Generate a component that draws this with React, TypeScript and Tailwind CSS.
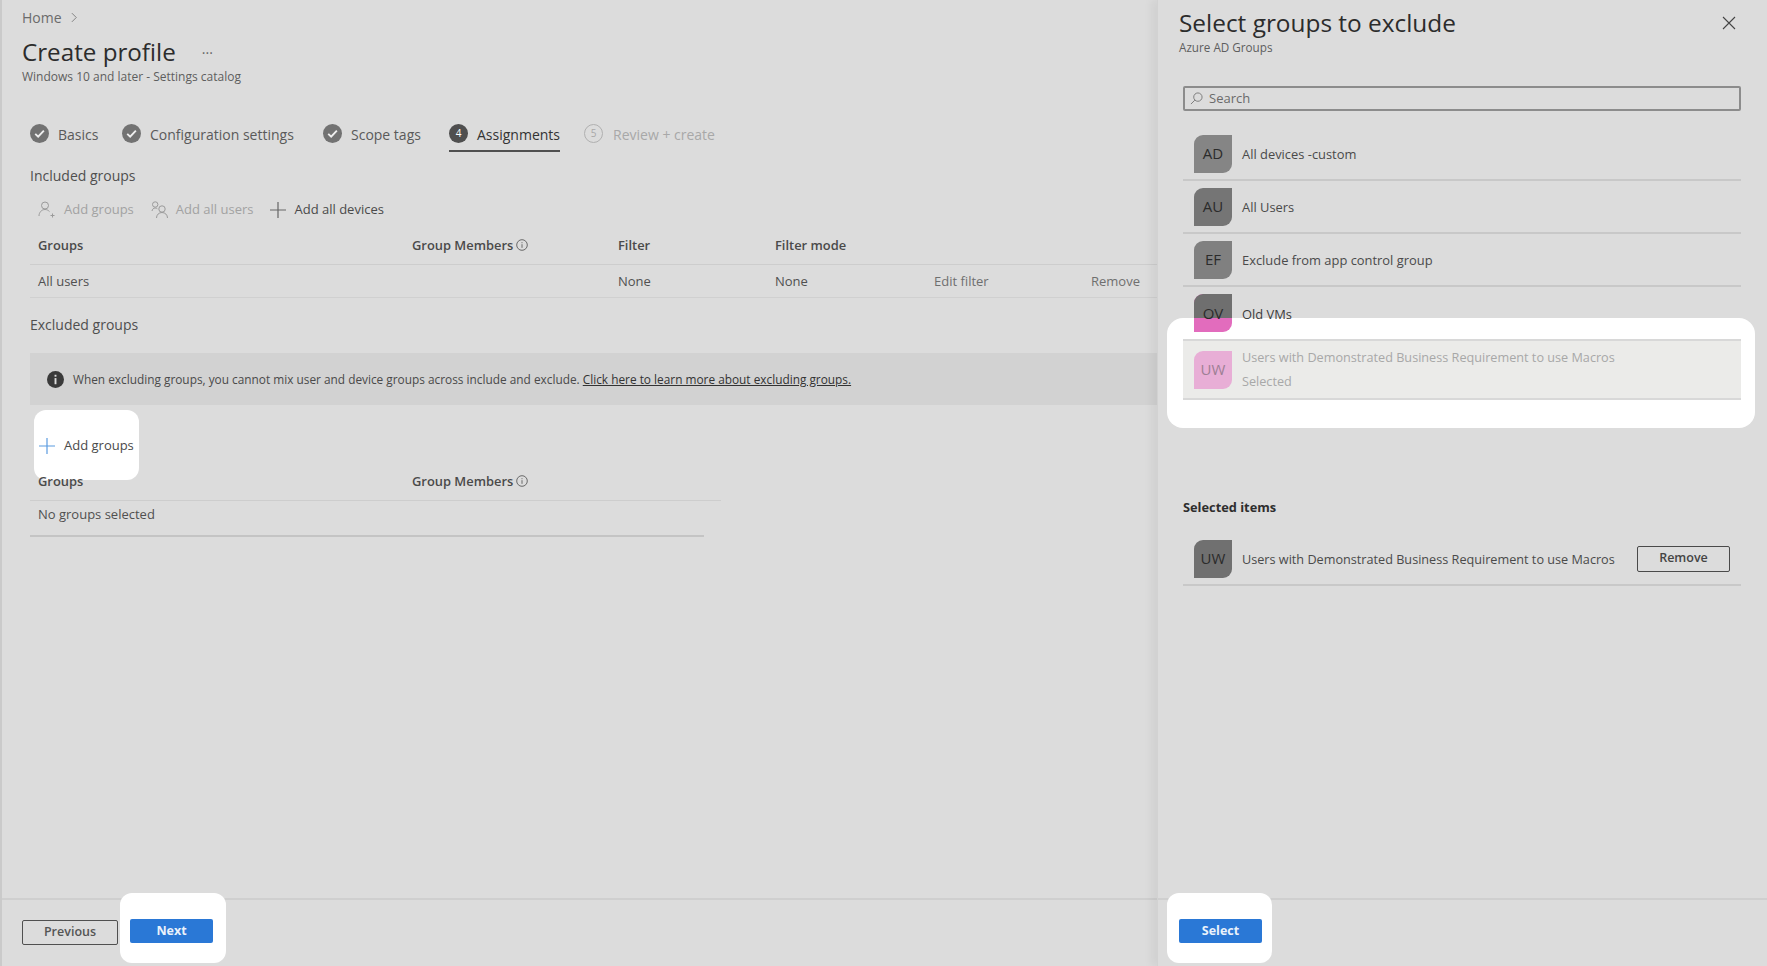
const font = "font-['Open_Sans',sans-serif]";

const CheckCircle = () => (
  <svg viewBox="0 0 20 20" className="w-[19px] h-[19px] shrink-0">
    <circle cx="10" cy="10" r="10" fill="#727272" />
    <path d="M5.500 10.400 8.600 13.400 14.600 7" fill="none" stroke="#eeeeee" strokeWidth="2" />
  </svg>
);

const PersonAdd = () => (
  <svg viewBox="0 0 18 18" className="w-[18px] h-[18px] shrink-0" fill="none" stroke="#9a9a9a" strokeWidth="1">
    <circle cx="7" cy="4.500" r="3.500" />
    <path d="M1 15c0-3.600 2.600-6.500 6-6.500 1.800 0 3.400.8 4.500 2.100" />
    <path d="M14.500 12.500v4M12.500 14.500h4" />
  </svg>
);

const PersonsIcon = () => (
  <svg viewBox="0 0 18 18" className="w-[18px] h-[18px] shrink-0" fill="none" stroke="#9a9a9a" strokeWidth="1">
    <circle cx="4.200" cy="3.500" r="2.700" />
    <path d="M1 10c.3-1.900 1.600-3 3.200-3 .8 0 1.500.2 2.100.7" />
    <circle cx="11" cy="8" r="3.200" />
    <path d="M5.500 17c0-3.200 2.400-5.500 5.500-5.500s5.500 2.300 5.500 5.500" />
  </svg>
);

const Plus = ({ color }: { color: string }) => (
  <svg viewBox="0 0 16 16" className="w-[16px] h-[16px] shrink-0" fill="none" stroke={color} strokeWidth="1.200">
    <path d="M8 0v16M0 8h16" />
  </svg>
);

const InfoOutline = () => (
  <svg viewBox="0 0 12 12" className="w-[12px] h-[12px] shrink-0" fill="none" stroke="#5c5c5c" strokeWidth="0.900">
    <circle cx="6" cy="6" r="5.300" />
    <path d="M6 5.200v3.600M6 3.200v1" />
  </svg>
);

const Avatar = ({ label, className }: { label: string; className: string }) => (
  <div className={`w-[38px] h-[38px] shrink-0 rounded-tl-[9px] rounded-br-[9px] flex items-center justify-center text-[15px] ${className}`}>
    {label}
  </div>
);

const GroupRow = ({ label, name, color }: { label: string; name: string; color: string }) => (
  <div className="h-[53px] flex items-center gap-[10px] pl-[11px] border-b-2 border-[#c8c8c8] text-[12.900px] text-[#4a4a4a]">
    <Avatar label={label} className={`${color} text-[#2b2b2b]`} />
    <span className="pt-[2px]">{name}</span>
  </div>
);

const Tab = ({ width, icon, label, active }: { width: string; icon: React.ReactNode; label: string; active?: boolean }) => (
  <div className={`${width} h-[31px] pt-[3px] flex`}>
    <div className={`flex h-[28px] gap-[9px] items-start ${active ? "border-b-[2px] border-[#505050] text-[#333333]" : "text-[#5a5a5a]"}`}>
      {icon}
      <span className="text-[14px]">{label}</span>
    </div>
  </div>
);

const TableHead = ({ className, filters }: { className: string; filters?: boolean }) => (
  <div className={`h-[37px] pb-[1px] grid grid-cols-[374px_206px_157px_159px_157px_1fr] items-center pl-[8px] border-b border-[#cdcdcd] text-[12.900px] font-semibold text-[#4a4a4a] ${className}`}>
    <span className="relative z-20">Groups</span>
    <span className="flex items-center gap-[3px]">
      Group Members <InfoOutline />
    </span>
    {filters && <span>Filter</span>}
    {filters && <span>Filter mode</span>}
  </div>
);

export default function App() {
  return (
    <div className={`relative w-[1767px] h-[966px] overflow-hidden bg-[#dcdcdc] flex ${font}`}>
      {/* main page */}
      <div className="w-[1157px] h-full shrink-0 flex flex-col border-l-2 border-[#cacaca]">
        <div className="pl-[20px]">
          <div className="mt-[7px] h-[20px] flex items-center gap-[9px] text-[14px] text-[#6b6b6b]">
            Home
            <svg viewBox="0 0 8 12" className="w-[7px] h-[11px]" fill="none" stroke="#777777" strokeWidth="1">
              <path d="M1 1l5 5-5 5" />
            </svg>
          </div>
          <div className="mt-[8px] h-[34px] flex items-center text-[#2c2c2c]">
            <span className="text-[24.200px]">Create profile</span>
            <span className="ml-[26px] text-[14px] text-[#666666] pb-[8px]">...</span>
          </div>
          <div className="h-[16px] flex items-center text-[12px] text-[#5e5e5e]">
            Windows 10 and later - Settings catalog
          </div>
        </div>

        <div className="mt-[36px] pl-[28px] flex">
          <Tab width="w-[92px]" icon={<CheckCircle />} label="Basics" />
          <Tab width="w-[201px]" icon={<CheckCircle />} label="Configuration settings" />
          <Tab width="w-[126px]" icon={<CheckCircle />} label="Scope tags" />
          <Tab
            width="w-[135px]"
            active
            icon={
              <div className="w-[19px] h-[19px] rounded-full bg-[#4f4f4f] text-white text-[10px] flex items-center justify-center">4</div>
            }
            label="Assignments"
          />
          <div className="h-[28px] mt-[3px] flex items-start gap-[10px] text-[14px] text-[#a8a8a8]">
            <div className="w-[19px] h-[19px] rounded-full border border-[#b0b0b0] text-[10px] flex items-center justify-center">5</div>
            <span>Review + create</span>
          </div>
        </div>

        <div className="pl-[28px] flex flex-col">
          <div className="mt-[13px] h-[20px] flex items-center text-[14px] text-[#4f4f4f]">Included groups</div>
          <div className="mt-[11px] h-[28px] flex items-center pl-[8px] text-[13px]">
            <div className="flex items-center gap-[8px] text-[#a2a2a2]">
              <PersonAdd />
              Add groups
            </div>
            <div className="ml-[17px] flex items-center gap-[7px] text-[#a2a2a2]">
              <PersonsIcon />
              Add all users
            </div>
            <div className="ml-[17px] flex items-center gap-[8px] text-[#4a4a4a]">
              <Plus color="#666666" />
              Add all devices
            </div>
          </div>

          <div className="mt-[4px]">
            <TableHead className="w-[1127px]" filters />
            <div className="h-[33px] pt-[2px] grid grid-cols-[374px_206px_157px_159px_157px_1fr] items-center pl-[8px] border-b border-[#d0d0d0] text-[13px] text-[#505050]">
              <span>All users</span>
              <span />
              <span>None</span>
              <span>None</span>
              <span className="text-[#6f6f6f]">Edit filter</span>
              <span className="text-[#6f6f6f]">Remove</span>
            </div>
          </div>

          <div className="mt-[16px] h-[20px] flex items-center text-[14px] text-[#4f4f4f]">Excluded groups</div>

          <div className="mt-[19px] h-[52px] pt-[1px] bg-[#d2d2d2] flex items-center pl-[17px] gap-[9px] text-[11.850px] text-[#4a4a4a]">
            <svg viewBox="0 0 18 18" className="w-[17px] h-[17px] shrink-0">
              <circle cx="9" cy="9" r="9" fill="#3a3a3a" />
              <rect x="8" y="7.500" width="2" height="6.500" fill="#dddddd" />
              <rect x="8" y="4" width="2" height="2" fill="#dddddd" />
            </svg>
            <span>
              When excluding groups, you cannot mix user and device groups across include and exclude.{" "}
              <span className="underline text-[#333333]">Click here to learn more about excluding groups.</span>
            </span>
          </div>

          <div className="relative z-20 mt-[27px] h-[28px] flex items-center pl-[9px] gap-[9px] text-[13px] text-[#4a4a4a]">
            <Plus color="#5b9be0" />
            Add groups
          </div>

          <div className="mt-[4px]">
            <TableHead className="w-[691px]" />
            <div className="h-[36px] pb-[7px] w-[674px] flex items-center pl-[8px] border-b-2 border-[#c4c4c4] text-[13px] text-[#505050]">
              No groups selected
            </div>
          </div>
        </div>

        <div className="mt-auto h-[68px] border-t-2 border-[#cfcfcf] pt-[20px] pl-[20px] flex items-start gap-[12px]">
          <button className="w-[96px] h-[25px] rounded-[2px] border-[1.500px] border-[#505050] text-[12.500px] font-semibold text-[#555555]">
            Previous
          </button>
          <button className="relative z-20 -mt-[1px] w-[83px] h-[24px] rounded-[2px] bg-[#2a78d6] text-[12.500px] font-bold text-[#eaf2fb]">
            Next
          </button>
        </div>
      </div>

      {/* side panel */}
      <div className="flex-1 h-full flex flex-col pl-[21px] shadow-[-6px_0_8px_rgba(0,0,0,0.05)] border-l border-[#d2d2d2]">
        <div className="mt-[8px] h-[30px] flex items-center justify-between pr-[31px]">
          <span className="text-[24.400px] text-[#2c2c2c]">Select groups to exclude</span>
          <svg viewBox="0 0 14 14" className="w-[14px] h-[14px]" fill="none" stroke="#444444" strokeWidth="1.100">
            <path d="M1 1l12 12M13 1 1 13" />
          </svg>
        </div>
        <div className="mt-[2px] h-[16px] flex items-center text-[11.700px] text-[#5e5e5e]">Azure AD Groups</div>

        <div className="ml-[4px] w-[558px] flex flex-col">
          <div className="mt-[30px] h-[25px] border-2 border-[#8c8c8c] rounded-[2px] flex items-center pl-[5px] gap-[6px] text-[13px] text-[#6a6a6a]">
            <svg viewBox="0 0 14 14" className="w-[13px] h-[13px]" fill="none" stroke="#777777" strokeWidth="1">
              <circle cx="8.500" cy="5.500" r="4.500" />
              <path d="M5.200 8.800 1 13" />
            </svg>
            Search
          </div>

          <div className="mt-[17px]">
            <GroupRow label="AD" name="All devices -custom" color="bg-[#858585]" />
            <GroupRow label="AU" name="All Users" color="bg-[#757575]" />
            <GroupRow label="EF" name="Exclude from app control group" color="bg-[#808080]" />
            <div className="relative z-20 h-[52px] flex items-center gap-[10px] pl-[11px] text-[12.900px] text-[#3c3c3c]">
              <div className="relative w-[38px] h-[38px] shrink-0 rounded-tl-[9px] rounded-br-[9px] overflow-hidden bg-[#e26cbd] flex items-center justify-center text-[15px] text-[#2b2b2b]">
                <div className="absolute inset-x-0 top-0 h-[24px] bg-[#6f6f6f]" />
                <span className="relative">OV</span>
              </div>
              <span className="pt-[4px]">Old VMs</span>
            </div>
            <div className="relative z-20 h-[61px] flex items-center gap-[10px] pl-[11px] bg-[#ebebe9] border-t-2 border-b-2 border-[#d8d8d8] text-[12.660px] text-[#a8a8a8]">
              <Avatar label="UW" className="bg-[#e8aed6] text-[#9d7f94]" />
              <div className="flex flex-col gap-[5px]">
                <span>Users with Demonstrated Business Requirement to use Macros</span>
                <span>Selected</span>
              </div>
            </div>
          </div>

          <div className="mt-[98px] h-[20px] flex items-center text-[12.800px] font-bold text-[#2e2e2e]">Selected items</div>

          <div className="mt-[15px] h-[53px] flex items-center gap-[10px] pl-[11px] border-b-2 border-[#c8c8c8] text-[12.660px] text-[#4a4a4a]">
            <Avatar label="UW" className="bg-[#707070] text-[#2b2b2b]" />
            <span className="flex-1 pt-[2px]">Users with Demonstrated Business Requirement to use Macros</span>
            <button className="mr-[11px] w-[93px] h-[26px] rounded-[2px] border-[1.500px] border-[#4a4a4a] text-[12.500px] font-semibold text-[#444444]">
              Remove
            </button>
          </div>
        </div>

        <div className="mt-auto h-[68px] -ml-[21px] pl-[21px] border-t-2 border-[#cfcfcf] pt-[19px] flex items-start">
          <button className="relative z-20 w-[83px] h-[24px] rounded-[2px] bg-[#2a78d6] text-[12.500px] font-bold text-[#eaf2fb]">
            Select
          </button>
        </div>
      </div>

      {/* white spotlights over the dimmed page */}
      <div className="absolute z-10 left-[34px] top-[410px] w-[105px] h-[70px] bg-white rounded-[12px]" />
      <div className="absolute z-10 left-[120px] top-[893px] w-[106px] h-[70px] bg-white rounded-[12px]" />
      <div className="absolute z-10 left-[1167px] top-[318px] w-[588px] h-[110px] bg-white rounded-[16px]" />
      <div className="absolute z-10 left-[1167px] top-[893px] w-[105px] h-[70px] bg-white rounded-[12px]" />
    </div>
  );
}
